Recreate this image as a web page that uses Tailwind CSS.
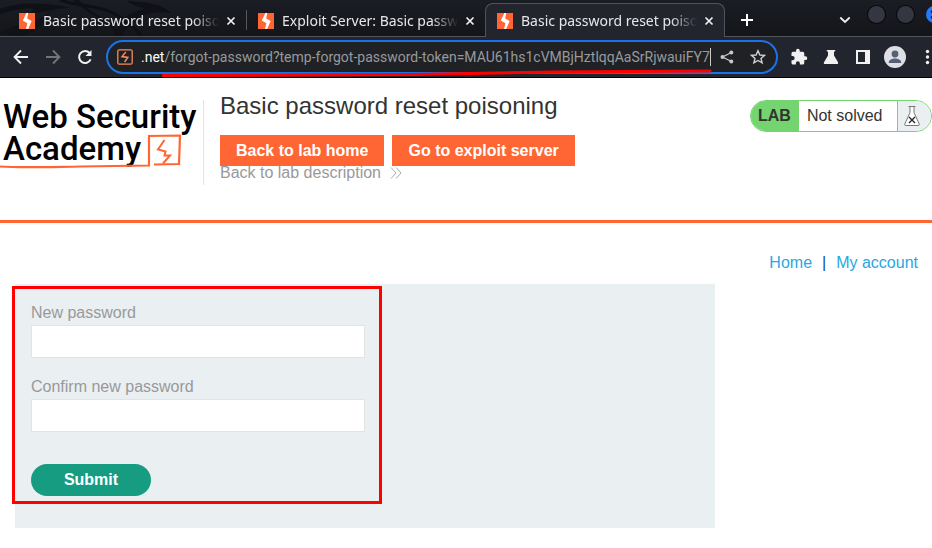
<!DOCTYPE html>
<html lang="en">
<head>
<meta charset="utf-8">
<title>Basic password reset poisoning</title>
<script src="https://cdn.jsdelivr.net/npm/@tailwindcss/browser@4"></script>
</head>
<body class="bg-white font-['Liberation_Sans',Arial,sans-serif] text-base text-[#333332] overflow-hidden">
<svg class="hidden">
  <symbol id="bolt" viewBox="0 0 16 16"><path fill="#ff6633" d="M0 0h16v16H0z"/><path fill="#fff" d="M7.400 0H9.200L8.200 5.600 12.600 8 9.200 16H7L8.400 10.200 3.800 7.600z"/></symbol>
  <symbol id="close" viewBox="0 0 10 10"><path d="M1.500 1.500l7 7m0-7l-7 7" stroke="#f1f1f1" stroke-width="1.700" fill="none"/></symbol>
</svg>

<div class="relative bg-[#23252e] font-['Noto_Sans','Open_Sans',sans-serif]">
  <div class="relative flex h-[37px] items-end bg-[#17191f] bg-linear-to-b from-[#1b1d25] to-[#141519]">
    <svg class="absolute left-0 top-0 h-9 w-60" viewBox="0 0 240 36" fill="none" aria-hidden="true">
      <path d="M0 9C22 1 48 3 70 8c-17 0-28 6-41 5C42 6 24 7 0 14z" fill="#101116"/>
      <path d="M60 0c20 7 38 5 53 13 13 7 22 14 28 23" stroke="#0f1015" stroke-width="3"/>
      <path d="M79 0c15 17 30 17 44 36h-6C108 18 90 17 73 0z" fill="#101116"/>
      <path d="M115 36c3-18 14-23 30-27-8-3-13-4-18-8 18 1 33 2 45 12-16-2-29 0-37 8-7 6-10 10-14 15z" fill="#101116"/>
      <path d="M0 33c18-12 37-7 50-22-3 12-14 21-30 25z" fill="#111217"/>
    </svg>
    <div class="absolute inset-x-0 bottom-0 h-px bg-[#52545b]"></div>
    <div class="relative flex h-9 w-[246px] items-center pl-[19px] pt-1">
      <svg class="size-4"><use href="#bolt"/></svg>
      <a href="#" class="ml-2 w-[176px] overflow-hidden whitespace-nowrap text-sm leading-6 text-[#e6e7ea] mask-r-from-85% mask-r-to-100%">Basic password reset poisoning</a>
      <button aria-label="Close tab" class="ml-[7px] size-[10px]"><svg class="size-[10px]"><use href="#close"/></svg></button>
    </div>
    <div class="relative mb-[7px] h-5 w-px bg-[#55575d]"></div>
    <div class="relative flex h-9 w-[238px] items-center pl-[11px] pt-1">
      <svg class="size-4"><use href="#bolt"/></svg>
      <a href="#" class="ml-2 w-[176px] overflow-hidden whitespace-nowrap text-sm leading-6 text-[#e6e7ea] mask-r-from-85% mask-r-to-100%">Exploit Server: Basic password reset</a>
      <button aria-label="Close tab" class="ml-[7px] size-[10px]"><svg class="size-[10px]"><use href="#close"/></svg></button>
    </div>
    <div class="relative flex h-[34px] w-[240px] items-center rounded-t-lg border border-b-0 border-[#52545b] bg-[#23252e] pl-[11px] pt-px">
      <svg class="size-4"><use href="#bolt"/></svg>
      <a href="#" class="ml-2 w-[176px] overflow-hidden whitespace-nowrap text-sm leading-6 text-[#e6e7ea] mask-r-from-85% mask-r-to-100%">Basic password reset poisoning</a>
      <button aria-label="Close tab" class="ml-[7px] size-[10px]"><svg class="size-[10px]"><use href="#close"/></svg></button>
    </div>
    <button aria-label="New tab" class="mb-[11px] ml-4 size-3"><svg class="size-3" viewBox="0 0 12 12"><path d="M6 0v12M0 6h12" stroke="#fff" stroke-width="2"/></svg></button>
    <div class="flex-1"></div>
    <button aria-label="Search tabs" class="mb-[13px] mr-[17px] h-[8px] w-3"><svg class="h-2 w-3" viewBox="0 0 12 8"><path d="M1.300 1.500L6 6l4.700-4.500" stroke="#eee" stroke-width="1.800" fill="none"/></svg></button>
    <div class="-mr-[11px] flex gap-3 self-start pt-[6px]">
      <button aria-label="Minimize" class="size-[17px] rounded-full bg-[#343741] ring-1 ring-[#08090b]"></button>
      <button aria-label="Maximize" class="size-[17px] rounded-full bg-[#343741] ring-1 ring-[#08090b]"></button>
      <button aria-label="Close window" class="size-[17px] rounded-full bg-[#2777ff]"><svg class="size-[17px]" viewBox="0 0 17 17"><path d="M5 5l7 7m0-7l-7 7" stroke="#17223a" stroke-width="2"/></svg></button>
    </div>
  </div>

  <div class="flex h-[41px] items-center border-b border-black pl-3">
    <button aria-label="Back" class="size-[18px]"><svg class="size-[18px]" viewBox="0 0 18 18" fill="none" stroke="#f1f1f1" stroke-width="1.900"><path d="M16 9H3M9 2.500L2.600 9 9 15.500"/></svg></button>
    <button aria-label="Forward" class="ml-[14px] size-[18px]"><svg class="size-[18px]" viewBox="0 0 18 18" fill="none" stroke="#73757b" stroke-width="1.900"><path d="M2 9h13M9 2.500L15.400 9 9 15.500"/></svg></button>
    <button aria-label="Reload" class="ml-[14px] size-[18px]"><svg class="size-[18px]" viewBox="0 0 18 18" fill="none"><path d="M14.600 11.400A6 6 0 1 1 13.600 5" stroke="#f1f1f1" stroke-width="2"/><path d="M15.500 2v6h-6z" fill="#f1f1f1"/></svg></button>
    <div class="ml-3 flex h-[34px] w-[672px] items-center rounded-full border-2 border-[#1a73e8] bg-[#202124] pl-[9px]">
      <svg class="size-4 shrink-0" viewBox="0 0 16 16" fill="none"><rect x=".8" y=".8" width="14.400" height="14.400" rx="1.500" stroke="#f58b5e" stroke-width="1.300"/><path d="M8.800 3L5 7.600 10.800 8.400 7.600 13" stroke="#f58b5e" stroke-width="1.500"/></svg>
      <div role="textbox" aria-label="Address" class="ml-2 whitespace-nowrap font-[Roboto,'Noto_Sans',sans-serif] text-sm leading-6 text-[#969a9f]"><span class="text-white">.net</span>/forgot-password?temp-forgot-password-token=MAU61hs1cVMBjHztlqqAaSrRjwauiFY7</div>
      <div class="h-[18px] w-px bg-[#c9cacc]"></div>
      <div class="flex-1"></div>
      <button aria-label="Share" class="size-[14px]"><svg class="size-[14px]" viewBox="0 0 14 14"><path d="M11.500 2.500L2.500 7l9 4.500" stroke="#c7c8ca" stroke-width="1.300" fill="none"/><g fill="#c7c8ca"><circle cx="11.300" cy="2.500" r="2"/><circle cx="2.500" cy="7" r="2"/><circle cx="11.300" cy="11.500" r="2"/></g></svg></button>
      <button aria-label="Bookmark" class="ml-4 mr-[10px] size-4"><svg class="size-4" viewBox="0 0 16 16"><path d="M8 1.800l1.900 4.200 4.600.4-3.500 3 1.100 4.500L8 11.500l-4.100 2.400L5 9.400l-3.500-3 4.600-.4z" fill="none" stroke="#d0d1d3" stroke-width="1.400"/></svg></button>
    </div>
    <button aria-label="Extensions" class="ml-[12px] size-[18px]"><svg class="size-[18px]" viewBox="0 0 24 24" fill="#f1f1f1"><path d="M20.500 11H19V7a2 2 0 0 0-2-2h-4V3.500a2.500 2.500 0 0 0-5 0V5H4a2 2 0 0 0-2 2v3.800h1.500a2.700 2.700 0 0 1 0 5.400H2V20c0 1.100.9 2 2 2h3.800v-1.500a2.700 2.700 0 0 1 5.400 0V22H17a2 2 0 0 0 2-2v-4h1.500a2.500 2.500 0 0 0 0-5z"/></svg></button>
    <button aria-label="Labs" class="ml-[15px] size-4"><svg class="size-4" viewBox="0 0 16 16" fill="#f1f1f1"><path d="M3.800 1h8.400v1.600H11v3.800l4 6.800c.6 1-.1 1.800-1 1.800H2c-1 0-1.600-.8-1-1.800l4-6.800V2.600H3.800z"/></svg></button>
    <button aria-label="Side panel" class="ml-[17px] size-[14px] border-2 border-r-[5px] border-[#f1f1f1]"></button>
    <button aria-label="Profile" class="ml-[14px] size-[22px]"><svg class="size-[22px]" viewBox="0 0 22 22"><circle cx="11" cy="11" r="11" fill="#dcdfe5"/><circle cx="11" cy="8" r="3.400" fill="#566074"/><path d="M4.800 16.200c0-2.600 3.800-3.800 6.200-3.800s6.200 1.200 6.200 3.800v.8H4.800z" fill="#566074"/></svg></button>
    <button aria-label="Menu" class="ml-[19px] h-4 w-[5px] shrink-0"><svg class="h-4 w-[5px]" viewBox="0 0 5 16" fill="#f1f1f1"><circle cx="2.500" cy="2.500" r="1.700"/><circle cx="2.500" cy="8" r="1.700"/><circle cx="2.500" cy="13.500" r="1.700"/></svg></button>
  </div>
  <svg class="absolute left-[162px] top-[69px] h-[9px] w-[550px]" viewBox="0 0 550 9" aria-hidden="true"><path d="M1 6.500L250 5.500 390 3 548 2" fill="none" stroke="#f00" stroke-width="3" stroke-linecap="round"/></svg>
</div>

<header class="flex h-[145px] items-start border-b-3 border-[#ff6633] pt-[22px]">
  <a href="#" aria-label="Web Security Academy" class="block h-[85px] w-[204px] border-r border-[#e3e3e3]">
    <svg class="h-[85px] w-[203px]" viewBox="0 0 203 85">
      <g fill="#000" font-family="Roboto, sans-serif" font-weight="500" font-size="33"><text x="3" y="28">Web Security</text><text x="3" y="60">Academy</text></g>
      <path d="M0 66.500C20 68 48 67 80 66.500L149 65.500 149 36 180 35.500 179 64 154 64.500" fill="none" stroke="#ff6633" stroke-width="2.200"/>
      <path d="M164.500 40L158 49.500l7.500 2-1 4 5.500 0-7 8" fill="none" stroke="#ff6633" stroke-width="2"/>
    </svg>
  </a>
  <div class="ml-4 flex-1">
    <h1 class="-mt-2 text-2xl leading-7">Basic password reset poisoning</h1>
    <div class="mt-[15px] flex gap-2 font-bold leading-[31px] text-white">
      <a href="#" class="bg-[#ff6633] px-4">Back to lab home</a>
      <a href="#" class="bg-[#ff6633] px-4">Go to exploit server</a>
    </div>
    <a href="#" class="-mt-[2px] flex items-center leading-[18px] text-[#999]">Back to lab description
      <svg class="ml-[9px] h-3 w-3" viewBox="0 0 12 12" fill="none" stroke="#aaa"><path d="M1 .5L6 6 1 11.500M6 .5L11 6 6 11.500"/></svg></a>
  </div>
  <div class="flex h-8 w-[182px] overflow-hidden rounded-full border border-[#74d46f] leading-[30px]">
    <span class="bg-[#74d46f] pl-[7px] pr-2 font-bold">LAB</span>
    <span class="flex-1 pl-2">Not solved</span>
    <span class="flex w-[34px] items-center border-l border-[#74d46f] bg-[#eaeff2] pl-1.5">
      <svg class="h-5 w-4" viewBox="0 0 16 20" fill="#fff" stroke="#777"><path d="M4.500.5h7M6 .5v6L.7 18.200q-.3 1.300 1 1.300h12.600q1.300 0 1-1.300L10 6.500v-6"/><path d="M5 11l6 6m0-6l-6 6" stroke="#222" stroke-width="1.300"/></svg>
    </span>
  </div>
</header>

<main>
  <nav class="flex justify-end gap-[10px] pr-[14px] pt-[31px] leading-[18px] text-[#29a7df]">
    <a href="#">Home</a><span class="text-[#0f4d9b]">|</span><a href="#">My account</a>
  </nav>
  <div class="relative ml-[15px] mt-3 max-w-[700px] bg-[#eaeff2] p-4 pb-8">
    <form class="flex max-w-[334px] flex-col items-start text-[#999]" onsubmit="return false">
      <label for="new-password" class="mt-1 leading-[18px]">New password</label>
      <input id="new-password" type="password" class="mt-[3px] h-[33px] w-full border border-[#e3e3e3] bg-white px-2">
      <label for="confirm-password" class="mt-5 leading-[18px]">Confirm new password</label>
      <input id="confirm-password" type="password" class="mt-[3px] h-[33px] w-full border border-[#e3e3e3] bg-white px-2">
      <button type="submit" class="mt-8 h-8 w-[120px] rounded-full bg-[#169c81] font-bold text-white">Submit</button>
    </form>
    <div class="pointer-events-none absolute -left-[3px] top-[2px] h-[218px] w-[370px] border-3 border-[#f00]"></div>
  </div>
</main>
</body>
</html>
